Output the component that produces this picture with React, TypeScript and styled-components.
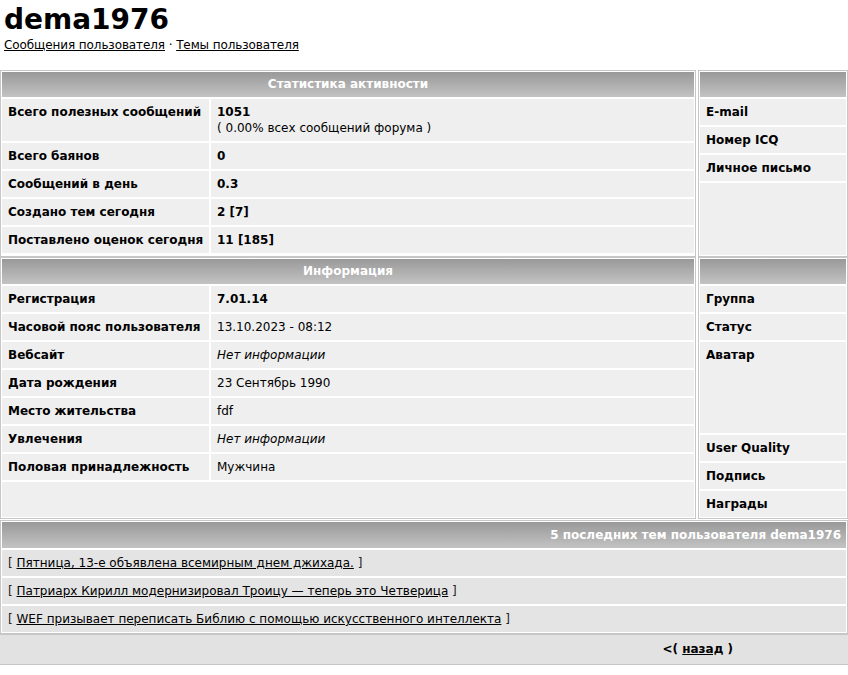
import styled, { createGlobalStyle } from 'styled-components';

const GlobalStyle = createGlobalStyle`
    body {
        margin: 0;
        background: #fff;
        color: #000;
        font-family: "DejaVu Sans", Verdana, sans-serif;
        font-size: 12px;
    }
    a {
        color: #000;
    }
`;

const Title = styled.h1`
    margin: 0;
    padding: 3px 4px 0;
    font-size: 28px;
    line-height: 34px;
    font-weight: bold;
`;

const NavLinks = styled.div`
    padding: 0 4px;
    line-height: 16px;
    letter-spacing: -0.1px;
    margin-bottom: 17px;
`;

const Blocks = styled.div`
    display: flex;
    flex-direction: column;
`;

const Section = styled.div`
    display: grid;
    grid-template-columns: 1fr 150px;
    gap: 2px;
`;

const Panel = styled.div<{ $spaced?: boolean }>`
    display: flex;
    flex-direction: column;
    gap: 2px;
    border: 1px solid #c6c6c6;
    padding: 1px;
    background: #fff;
    margin-top: ${(p) => (p.$spaced ? 1 : 0)}px;
`;

const Header = styled.div<{ $align?: 'center' | 'right'; $tall?: boolean }>`
    height: ${(p) => (p.$tall ? 26 : 25)}px;
    line-height: ${(p) => (p.$tall ? 26 : 25)}px;
    padding: 0 5px;
    background: linear-gradient(#999999, #c3c3c3);
    color: #fff;
    font-weight: bold;
    text-align: ${(p) => p.$align || 'center'};
`;

const Row = styled.div`
    display: grid;
    grid-template-columns: 207px 1fr;
    gap: 2px;
`;

const Cell = styled.div<{ $bold?: boolean; $italic?: boolean; $height?: number }>`
    box-sizing: border-box;
    background: #efefef;
    padding: 5px 6px;
    line-height: 16px;
    white-space: nowrap;
    font-weight: ${(p) => (p.$bold ? 'bold' : 'normal')};
    font-style: ${(p) => (p.$italic ? 'italic' : 'normal')};
    ${(p) => (p.$height ? `height: ${p.$height}px;` : '')}
`;

const Filler = styled.div`
    flex: 1;
    background: #efefef;
`;

const TopicRow = styled.div`
    background: #e4e4e4;
    padding: 5px 6px;
    line-height: 16px;
    color: #222;
`;

const BottomBar = styled.div`
    height: 29px;
    line-height: 29px;
    background: #e2e2e2;
    border-top: 1px solid #c6c6c6;
    border-bottom: 1px solid #c6c6c6;
    text-align: right;
    padding-right: 115px;
    font-weight: bold;
`;

interface IField {
    label: string;
    value: React.ReactNode;
    bold?: boolean;
    italic?: boolean;
}

const stats: IField[] = [
    {
        label: 'Всего полезных сообщений',
        value: (
            <>
                <b>1051</b>
                <br />( 0.00% всех сообщений форума )
            </>
        ),
    },
    { label: 'Всего баянов', value: '0', bold: true },
    { label: 'Сообщений в день', value: '0.3', bold: true },
    { label: 'Создано тем сегодня', value: '2 [7]', bold: true },
    { label: 'Поставлено оценок сегодня', value: '11 [185]', bold: true },
];

const info: IField[] = [
    { label: 'Регистрация', value: '7.01.14', bold: true },
    { label: 'Часовой пояс пользователя', value: '13.10.2023 - 08:12' },
    { label: 'Вебсайт', value: 'Нет информации', italic: true },
    { label: 'Дата рождения', value: '23 Сентябрь 1990' },
    { label: 'Место жительства', value: 'fdf' },
    { label: 'Увлечения', value: 'Нет информации', italic: true },
    { label: 'Половая принадлежность', value: 'Мужчина' },
];

const topics = [
    'Пятница, 13-е объявлена всемирным днем джихада.',
    'Патриарх Кирилл модернизировал Троицу — теперь это Четверица',
    'WEF призывает переписать Библию с помощью искусственного интеллекта',
];

const FieldRows = ({ fields }: { fields: IField[] }) => (
    <>
        {fields.map((f) => (
            <Row key={f.label}>
                <Cell $bold>{f.label}</Cell>
                <Cell $bold={f.bold} $italic={f.italic}>
                    {f.value}
                </Cell>
            </Row>
        ))}
    </>
);

const App = () => {
    return (
        <>
            <GlobalStyle />
            <Title>dema1976</Title>
            <NavLinks>
                <a href="#">Сообщения пользователя</a> · <a href="#">Темы пользователя</a>
            </NavLinks>
            <Blocks>
                <Section>
                    <Panel>
                        <Header>Статистика активности</Header>
                        <FieldRows fields={stats} />
                        <Filler />
                    </Panel>
                    <Panel>
                        <Header />
                        <Cell $bold>E-mail</Cell>
                        <Cell $bold>Номер ICQ</Cell>
                        <Cell $bold>Личное письмо</Cell>
                        <Filler />
                    </Panel>
                </Section>
                <Section>
                    <Panel>
                        <Header>Информация</Header>
                        <FieldRows fields={info} />
                        <Filler />
                    </Panel>
                    <Panel>
                        <Header />
                        <Cell $bold>Группа</Cell>
                        <Cell $bold>Статус</Cell>
                        <Cell $bold $height={91}>
                            Аватар
                        </Cell>
                        <Cell $bold>User Quality</Cell>
                        <Cell $bold>Подпись</Cell>
                        <Cell $bold>Награды</Cell>
                    </Panel>
                </Section>
                <Panel $spaced>
                    <Header $align="right" $tall>
                        5 последних тем пользователя dema1976
                    </Header>
                    {topics.map((t) => (
                        <TopicRow key={t}>
                            [ <a href="#">{t}</a> ]
                        </TopicRow>
                    ))}
                </Panel>
                <BottomBar>
                    &lt;( <a href="#">назад</a> )
                </BottomBar>
            </Blocks>
        </>
    );
};

export default App;
